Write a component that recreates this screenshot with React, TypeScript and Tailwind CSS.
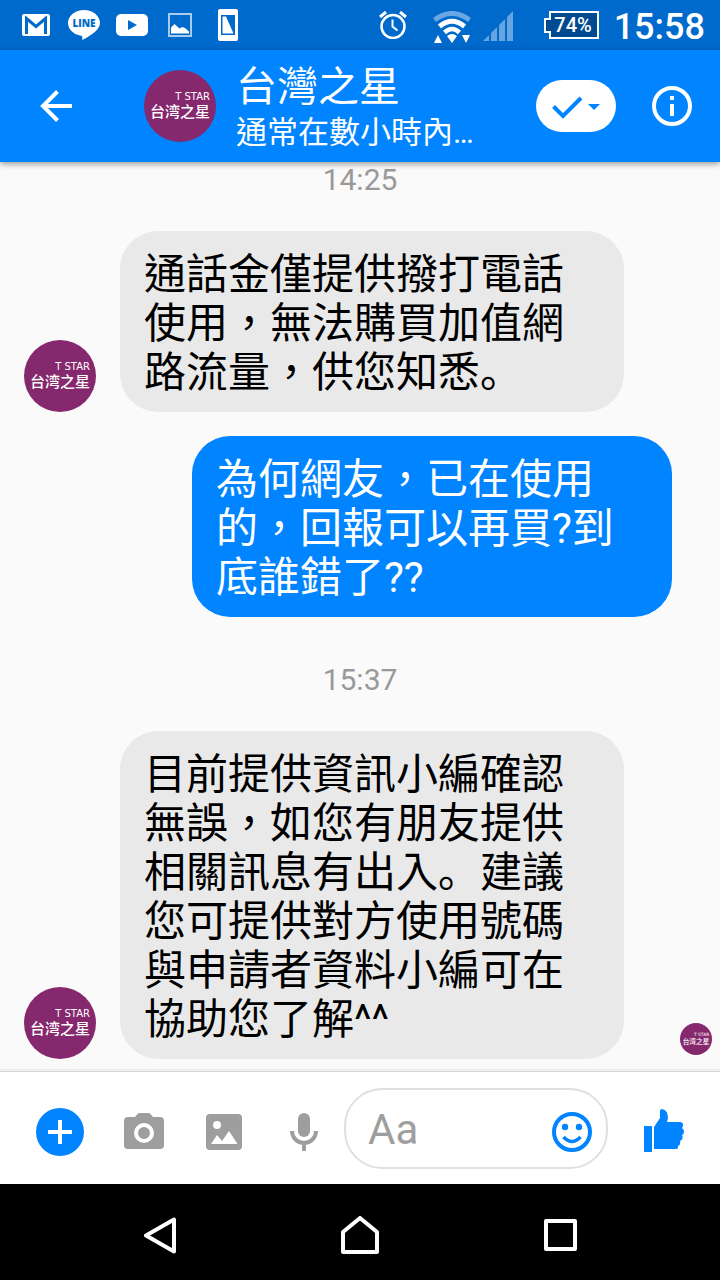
import type { ReactNode } from "react";

type Message = {
  id: number;
  from: "page" | "me";
  time?: string;
  text: string;
  seen?: boolean;
};

const messages: Message[] = [
  { id: 1, from: "page", time: "14:25", text: "通話金僅提供撥打電話使用，無法購買加值網路流量，供您知悉。" },
  { id: 2, from: "me", text: "為何網友，已在使用的，回報可以再買?到底誰錯了??" },
  {
    id: 3,
    from: "page",
    time: "15:37",
    text: "目前提供資訊小編確認無誤，如您有朋友提供相關訊息有出入。建議您可提供對方使用號碼與申請者資料小編可在協助您了解^^",
    seen: true,
  },
];

function Avatar({ className }: { className: string }) {
  return (
    <svg viewBox="0 0 72 72" className={`shrink-0 ${className}`} role="img" aria-label="台灣之星">
      <circle cx="36" cy="36" r="36" fill="#86286d" />
      <g fill="#fff" textAnchor="end">
        <text x="66" y="30" fontSize="10" className="font-['DejaVu_Sans',sans-serif]">
          T STAR
        </text>
        <text x="66" y="47" fontSize="15" className="font-['Noto_Sans_CJK_SC',sans-serif] font-medium">
          台湾之星
        </text>
      </g>
    </svg>
  );
}

function StatusBar() {
  return (
    <div className="flex h-[50px] items-center bg-[#0069cc] pl-[22px] pr-[15px] text-white">
      <svg width="28" height="22" viewBox="0 0 28 22">
        <rect width="28" height="22" rx="2" fill="#fff" />
        <path d="M4.500 20V4.500L14 12.500l9.500-8V20" fill="none" stroke="#0069cc" strokeWidth="3" />
      </svg>
      <svg width="32" height="30" viewBox="0 0 32 30" className="ml-[18px]">
        <path d="M16 0C7.200 0 0 5.800 0 13c0 6.300 5.500 11.600 13 12.700 1.600.3 1.400 1 1.200 4.300C20 27 32 20.500 32 13 32 5.800 24.800 0 16 0z" fill="#fff" />
        <text x="16" y="17" textAnchor="middle" fontSize="10" fill="#0069cc" className="font-['Open_Sans',sans-serif] font-extrabold">
          LINE
        </text>
      </svg>
      <svg width="32" height="22" viewBox="0 0 32 22" className="ml-4">
        <rect width="32" height="22" rx="5" fill="#fff" />
        <path d="M12 6v10l9-5z" fill="#0069cc" />
      </svg>
      <svg width="24" height="24" viewBox="0 0 24 24" className="ml-5">
        <rect x="1" y="1" width="22" height="22" fill="none" stroke="#a6cbee" strokeWidth="2" />
        <path d="M3 20.500v-6l3.500-3.500 5 4.500 2.500-1.500 3 1 4 3.500v2z" fill="#fff" />
      </svg>
      <svg width="20" height="32" viewBox="0 0 20 32" className="ml-[26px]">
        <rect width="20" height="32" rx="2" fill="#fff" />
        <path d="M3 6h14v20H3z" fill="#0069cc" />
        <path d="M4.500 7.500h3.500L15.500 24.500h-11z" fill="#fff" />
      </svg>

      <svg width="28" height="28" viewBox="0 0 28 28" className="ml-auto" fill="none" stroke="#fff">
        <circle cx="14" cy="15.500" r="11.500" strokeWidth="2.500" />
        <path d="M13.500 8.500v7l5 4" strokeWidth="2" />
        <path d="M1 6l6-5M27 6l-6-5" strokeWidth="3" />
      </svg>
      <svg width="38" height="33" viewBox="0 0 38 33" className="ml-[26px] mt-1" fill="none">
        <path d="M1.500 9Q19-4 36.500 9" stroke="#69a8e4" strokeWidth="5" />
        <path d="M6.500 15.500Q19 5 31.500 15.500" stroke="#fff" strokeWidth="5" />
        <path d="M11.500 21.500Q19 14.500 26.500 21.500" stroke="#fff" strokeWidth="4.500" />
        <path d="M14 25Q19 21 24 25L19 32zM1 32l4-8 4 8zM29 24h8l-4 8z" fill="#fff" />
      </svg>
      <svg width="30" height="30" viewBox="0 0 30 30" className="ml-3 mt-0.5" fill="#66a5e0">
        <path d="M0 30l6-6v6zM8 30v-8l6-6v14zM16 30V14l6-6v22zM24 30V6l6-6v30z" />
      </svg>
      <svg width="55" height="28" viewBox="0 0 55 28" className="ml-[31px]">
        <path d="M6 1h48v26H6v-6H1V8h5z" fill="#004a8f" stroke="#fff" strokeWidth="2" />
        <text x="29" y="21" textAnchor="middle" fontSize="20" fill="#fff" className="font-[Roboto,sans-serif] font-medium">
          74%
        </text>
      </svg>
      <time className="ml-[15px] mt-[3px] text-[36px] leading-[50px] font-medium">15:58</time>
    </div>
  );
}

function ChatHeader() {
  return (
    <header className="relative flex h-28 items-center bg-[#0084ff] pl-5 text-white shadow-[0_2px_6px_rgba(0,0,0,0.4)]">
      <button type="button" aria-label="返回" className="flex size-[72px] items-center justify-center">
        <svg width="32" height="32" viewBox="0 0 32 32" fill="none" stroke="#fff" strokeWidth="4">
          <path d="M32 16H3M17.500 1.500L3 16l14.500 14.500" />
        </svg>
      </button>
      <Avatar className="ml-[52px] size-[72px]" />
      <div className="ml-5 min-w-0 flex-1 pt-1">
        <h1 className="truncate text-[41px] leading-[50px]">台灣之星</h1>
        <p className="truncate text-[31px] leading-[42px]">通常在數小時內…</p>
      </div>
      <button type="button" aria-label="標示為完成" className="h-[52px] w-20 rounded-full bg-white">
        <svg width="80" height="52" viewBox="0 0 80 52">
          <path d="M17.500 26.500l9.500 9.500L45 18" fill="none" stroke="#0084ff" strokeWidth="4" />
          <path d="M52 24h12l-6 6z" fill="#0084ff" />
        </svg>
      </button>
      <button type="button" aria-label="資訊" className="ml-7 mr-5 p-2">
        <svg width="40" height="40" viewBox="0 0 40 40">
          <circle cx="20" cy="20" r="18" fill="none" stroke="#fff" strokeWidth="4" />
          <path d="M18 10h4v4h-4zM18 18h4v12h-4z" fill="#fff" />
        </svg>
      </button>
    </header>
  );
}

// The full stop sits in the lower left corner of its cell, while the comma is centred.
function MessageText({ text }: { text: string }) {
  const parts = text.split("。");
  return (
    <p>
      {parts.map((part, i) => (
        <span key={i}>
          {part}
          {i < parts.length - 1 && <span className="font-[Roboto,'Noto_Sans_CJK_SC',sans-serif]">。</span>}
        </span>
      ))}
    </p>
  );
}

function MessageRow({ message }: { message: Message }) {
  if (message.from === "me") {
    return (
      <div className="mt-6 flex justify-end pl-48 pr-12">
        <div className="rounded-[38px] bg-[#0084ff] px-6 pt-[19px] pb-[15px] text-[42px] leading-[49px] text-white">
          <MessageText text={message.text} />
        </div>
      </div>
    );
  }
  return (
    <div className="flex items-end pl-6">
      <Avatar className="size-[72px]" />
      <div className="ml-6 flex-1 rounded-[38px] bg-[#e9e9e9] px-6 pt-[19px] pb-[15px] text-[42px] leading-[49px] text-black">
        <MessageText text={message.text} />
      </div>
      <div className="flex w-24 justify-end pb-1 pr-2">{message.seen && <Avatar className="size-8" />}</div>
    </div>
  );
}

function ToolButton({ label, children }: { label: string; children: ReactNode }) {
  return (
    <button type="button" aria-label={label} className="flex h-20 w-20 shrink-0 items-center justify-center pt-2">
      {children}
    </button>
  );
}

function Composer() {
  return (
    <form
      className="flex h-[113px] items-center border-t border-[#d6d6d6] bg-white pl-5 shadow-[0_-2px_0_#eeeeee]"
      onSubmit={(e) => e.preventDefault()}
    >
      <div className="mr-1 flex">
        <ToolButton label="更多">
          <svg width="48" height="48" viewBox="0 0 48 48">
            <circle cx="24" cy="24" r="24" fill="#0084ff" />
            <path d="M24 12v24M12 24h24" stroke="#fff" strokeWidth="4" />
          </svg>
        </ToolButton>
      </div>
      <ToolButton label="相機">
        <svg width="40" height="40" viewBox="0 0 40 40">
          <path d="M4 5h7l2.500-3Q14.500 1 16 1h8q1.500 0 2.500 1L29 5h7q4 0 4 4v24q0 4-4 4H4q-4 0-4-4V9q0-4 4-4z" fill="#9e9e9e" />
          <circle cx="20" cy="21" r="8" fill="#9e9e9e" stroke="#fff" strokeWidth="4" />
        </svg>
      </ToolButton>
      <ToolButton label="相片">
        <svg width="36" height="36" viewBox="0 0 36 36">
          <rect width="36" height="36" rx="4" fill="#9e9e9e" />
          <circle cx="11" cy="11" r="4" fill="#fff" />
          <path d="M5 30l6-9 5 6 7-10 8.500 13z" fill="#fff" />
        </svg>
      </ToolButton>
      <ToolButton label="語音">
        <svg width="28" height="38" viewBox="0 0 28 38">
          <rect x="8" width="12" height="24" rx="6" fill="#9e9e9e" />
          <path d="M2 18a12 12 0 0 0 24 0M14 30v8" fill="none" stroke="#9e9e9e" strokeWidth="4" />
        </svg>
      </ToolButton>
      <div className="flex h-[81px] min-w-0 flex-1 items-center rounded-[38px] border-2 border-[#e0e0e0] pl-[22px] pr-3.5">
        <input
          type="text"
          aria-label="訊息"
          placeholder="Aa"
          className="min-w-0 flex-1 pt-0.5 text-[42px] leading-[49px] outline-none placeholder:text-[#9e9e9e]"
        />
        <button type="button" aria-label="表情符號" className="mt-2">
          <svg width="40" height="40" viewBox="0 0 40 40">
            <circle cx="20" cy="20" r="18" fill="none" stroke="#0084ff" strokeWidth="4" />
            <circle cx="13" cy="15" r="3.200" fill="#0084ff" />
            <circle cx="27" cy="15" r="3.200" fill="#0084ff" />
            <path d="M11.500 25q8.500 9 17 0" fill="none" stroke="#0084ff" strokeWidth="3.500" />
          </svg>
        </button>
      </div>
      <button type="button" aria-label="讚" className="flex w-28 shrink-0 justify-center pt-1">
        <svg width="40" height="44" viewBox="0 0 40 44" fill="#0084ff">
          <path d="M0 18h8v26H0z" />
          <path d="M10 19l6-9V3q0-2 2-2 6 1 6 9l-1 4h13q3 0 3 3 0 2-1 3 2 1 2 3.500 0 2.500-2 3.500 1 1 .5 3-.5 2.500-2.500 3 .5 1 0 3-.5 1.500-2 2 .5 3-2 3H10z" />
        </svg>
      </button>
    </form>
  );
}

function SystemNav() {
  return (
    <nav className="grid h-24 grid-cols-3 bg-black px-[60px] pt-2">
      <button type="button" aria-label="Back" className="flex items-center justify-center">
        <svg width="34" height="38" viewBox="0 0 34 38" fill="none" stroke="#fff" strokeWidth="4" strokeLinejoin="round">
          <path d="M31 2.500v32L3 18.500z" />
        </svg>
      </button>
      <button type="button" aria-label="Home" className="flex items-center justify-center">
        <svg width="40" height="40" viewBox="0 0 40 40" fill="none" stroke="#fff" strokeWidth="4" strokeLinejoin="round">
          <path d="M3 36V16L20 2l17 14v20z" />
        </svg>
      </button>
      <button type="button" aria-label="Recent apps" className="flex items-center justify-center">
        <svg width="34" height="34" viewBox="0 0 34 34" fill="none" stroke="#fff" strokeWidth="4" strokeLinejoin="round">
          <path d="M3 2h29v28H3z" />
        </svg>
      </button>
    </nav>
  );
}

export default function App() {
  return (
    <div className="flex min-h-screen flex-col bg-[#fafafa] font-[Roboto,'Noto_Sans_CJK_TC',sans-serif]">
      <StatusBar />
      <ChatHeader />
      <main className="flex-1 pb-3">
        {messages.map((m, i) => (
          <section key={m.id}>
            {m.time && (
              <time className={`mb-[33px] block text-center text-[30px] leading-9 text-[#999999] ${i > 0 ? "mt-[45px]" : ""}`}>
                {m.time}
              </time>
            )}
            <MessageRow message={m} />
          </section>
        ))}
      </main>
      <Composer />
      <SystemNav />
    </div>
  );
}
